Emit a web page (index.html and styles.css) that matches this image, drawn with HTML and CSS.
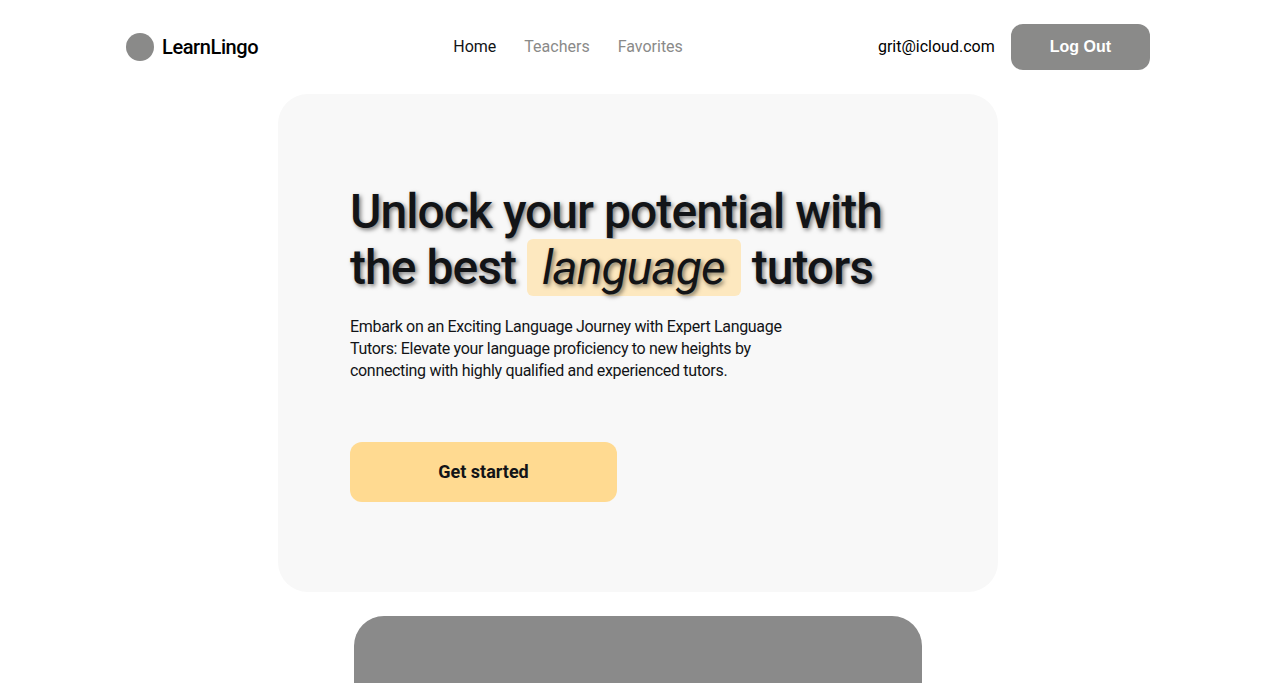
FILE: index.html
```html
<!DOCTYPE html>
<html lang="en">
<head>
<meta charset="utf-8">
<title>LearnLingo</title>
<link rel="stylesheet" href="styles.css">
</head>
<body>
<header class="header">
  <a class="logo" href="#"><span class="logo-mark"></span>LearnLingo</a>
  <nav class="nav">
    <a class="nav-link active" href="#">Home</a>
    <a class="nav-link" href="#">Teachers</a>
    <a class="nav-link" href="#">Favorites</a>
  </nav>
  <div class="user">
    <span>grit@icloud.com</span>
    <button class="logout" type="button">Log Out</button>
  </div>
</header>
<main class="main">
  <section class="hero">
    <h1 class="title">Unlock your potential with the best <span class="accent">language</span> tutors</h1>
    <p class="text">Embark on an Exciting Language Journey with Expert Language Tutors: Elevate your language proficiency to new heights by connecting with highly qualified and experienced tutors.</p>
    <button class="start" type="button">Get started</button>
  </section>
  <section class="picture"></section>
</main>
</body>
</html>
```

FILE: styles.css
```css
* { box-sizing: border-box; }
body {
  margin: 0;
  background: #fff;
  color: #121417;
  font: 16px/20px Roboto, sans-serif;
  -webkit-font-smoothing: antialiased;
}
html { scrollbar-width: none; }
a { color: inherit; text-decoration: none; }
button { border: 0; border-radius: 12px; font-family: inherit; font-weight: 700; cursor: pointer; }
.header {
  display: flex;
  align-items: center;
  justify-content: space-between;
  padding: 24px 128px 24px 126px;
  color: #000;
}
.logo { display: flex; align-items: center; gap: 8px; font-size: 20px; line-height: 24px; font-weight: 500; letter-spacing: -0.02em; }
.logo-mark { width: 28px; height: 28px; border-radius: 50%; background: #8a8a89; }
.nav { display: flex; gap: 28px; }
.nav-link { color: #8a8a89; }
.nav-link.active { color: #121417; }
.user { display: flex; align-items: center; gap: 16px; }
.logout { padding: 13px 39px; background: #8a8a89; color: #fff; font-family: "Liberation Sans", Arial, sans-serif; font-size: 16px; line-height: 20px; }
.main { display: flex; flex-direction: column; align-items: center; gap: 24px; padding-right: 2px; }
.hero {
  width: 100%;
  max-width: 720px;
  padding: 90px 72px;
  border-radius: 30px;
  background: #f8f8f8;
}
.title {
  max-width: 548px;
  margin: 0 0 20px;
  font-size: 48px;
  line-height: 56px;
  font-weight: 500;
  letter-spacing: -0.02em;
  text-shadow: 2px 2px 4px rgba(0, 0, 0, 0.5);
}
.accent { padding: 0 16px 0 15px; border-radius: 6px; background: #fde8bf; font-style: italic; font-weight: 400; }
.text { max-width: 471px; margin: 0 0 60px; line-height: 22px; letter-spacing: -0.02em; }
.start { width: 267px; height: 60px; background: #ffda91; color: #121417; font-size: 18px; line-height: 28px; }
.picture { width: 100%; max-width: 568px; height: 530px; border-radius: 30px; background: #8a8a8a; }
```
